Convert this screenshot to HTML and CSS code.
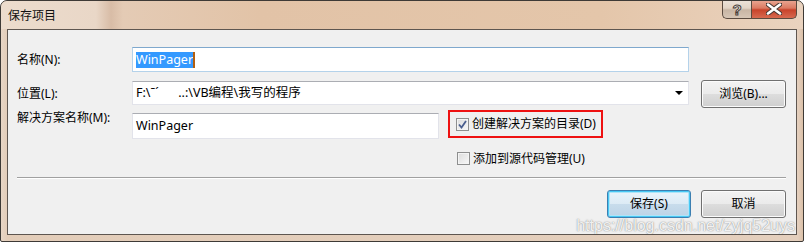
FILE: index.html
```html
<!DOCTYPE html>
<html lang="zh-CN">
<head>
    <meta charset="UTF-8">
    <title>保存项目</title>
    <link rel="stylesheet" href="styles.css">
</head>
<body>
    <div class="window">
        <div class="titlebar">
            <span class="title">保存项目</span>
            <div class="caption-buttons">
                <div class="cap-btn help">?</div>
                <div class="cap-btn close">
                    <svg width="16" height="12" viewBox="0 0 16 12">
                        <path d="M2 1.5 L14 10.5 M14 1.5 L2 10.5" stroke="#4a3a35" stroke-width="4.6" stroke-linecap="round"/>
                        <path d="M2 1.5 L14 10.5 M14 1.5 L2 10.5" stroke="#ffffff" stroke-width="2.6" stroke-linecap="round"/>
                    </svg>
                </div>
            </div>
        </div>

        <div class="client">
            <div class="row row-name">
                <label class="label">名称(N):</label>
                <div class="textbox focused wide"><span class="selected">WinPager</span><span class="caret"></span></div>
            </div>

            <div class="row row-path">
                <label class="label">位置(L):</label>
                <div class="textbox combo wide">
                    <span class="path">F:\ˉˊ      ..:\VB编程\我写的程序</span>
                    <span class="arrow"></span>
                </div>
                <div class="button browse">浏览(B)...</div>
            </div>

            <div class="row row-solution">
                <label class="label">解决方案名称(M):</label>
                <div class="textbox narrow">WinPager</div>
                <div class="highlight">
                    <span class="checkbox checked">
                        <svg width="9" height="9" viewBox="0 0 9 9">
                            <path d="M1 4.5 L3.5 7.5 L8 1" fill="none" stroke="#4a5e8e" stroke-width="1.8"/>
                        </svg>
                    </span>
                    <span class="check-text">创建解决方案的目录(D)</span>
                </div>
            </div>

            <div class="row row-scc">
                <span class="checkbox"></span>
                <span class="check-text">添加到源代码管理(U)</span>
            </div>

            <div class="separator"></div>

            <div class="row row-actions">
                <div class="button default">保存(S)</div>
                <div class="button">取消</div>
            </div>
        </div>

        <div class="watermark">https://blog.csdn.net/zyjq52uys</div>
    </div>
</body>
</html>
```

FILE: styles.css
```css
html, body {
    margin: 0;
    padding: 0;
    background: #ffffff;
}
body {
    font-family: "Noto Sans", "Noto Sans CJK SC", sans-serif;
    font-size: 12px;
    color: #000;
}
.window {
    position: relative;
    box-sizing: border-box;
    width: 804px;
    height: 242px;
    border: 1px solid #3e3a36;
    border-radius: 7px 7px 2px 2px;
    background: linear-gradient(to right, #e8d6c6 0, #e3cdb9 6px, #e4cfbd 797px, #d9bda4 803px);
    display: flex;
    flex-direction: column;
    padding: 0 6px 6px 6px;
    overflow: hidden;
}
.titlebar {
    height: 28px;
    margin: 0 -6px;
    padding: 0 6px 0 7px;
    display: flex;
    align-items: flex-start;
    justify-content: space-between;
    background: linear-gradient(to right, #ecdccd 0, #e9d7c7 95px, #d8bca6 110px, #e4cbb5 122px, #e2c3a7 260px, #e4c6aa 600px, #ead3bf 804px);
    border-radius: 6px 6px 0 0;
}
.title {
    margin-top: 7px;
    line-height: 16px;
    font-size: 12px;
    color: #111;
}
.caption-buttons {
    display: flex;
    margin-top: -1px;
}
.cap-btn {
    box-sizing: border-box;
    height: 19px;
    border: 1px solid #5b4b40;
    border-top: none;
    display: flex;
    align-items: center;
    justify-content: center;
}
.help {
    width: 29px;
    border-right: none;
    border-radius: 0 0 0 5px;
    background: linear-gradient(#ede3da 0, #e2d4c6 45%, #c8b5a4 55%, #d6c5b5 100%);
    font-family: "Liberation Sans", sans-serif;
    font-weight: bold;
    font-size: 15px;
    color: #ffffff;
    -webkit-text-stroke: 1px #4a4038;
    line-height: 17px;
}
.close {
    width: 46px;
    border-radius: 0 0 5px 0;
    background: linear-gradient(#eaa995 0, #db7a62 45%, #c8432b 55%, #d76a50 100%);
}
.client {
    flex: 1;
    border: 1px solid #5e5650;
    background: #f0f0f0;
    padding: 17px 10px 0 9px;
}
.row {
    display: flex;
    align-items: center;
}
.label {
    width: 115px;
    flex-shrink: 0;
    line-height: 16px;
}
.textbox {
    box-sizing: border-box;
    height: 25px;
    background: #ffffff;
    border: 1px solid #e2e3ea;
    border-top-color: #abadb3;
    padding: 0 3px;
    display: flex;
    align-items: center;
    font-size: 12.5px;
    line-height: 16px;
    white-space: pre;
}
.wide {
    width: 557px;
}
.narrow {
    width: 307px;
    height: 26px;
    align-self: flex-end;
}
.focused {
    border-color: #b4d2ea;
    border-top-color: #7fa8cd;
}
.selected {
    background: #3399ff;
    color: #ffffff;
}
.caret {
    width: 2px;
    height: 16px;
    background: #b35f10;
}
.row-name {
    height: 25px;
}
.row-path {
    height: 28px;
    margin-top: 8px;
}
.combo {
    height: 24px;
    align-self: flex-start;
    margin-top: 1px;
    justify-content: space-between;
}
.arrow {
    width: 0;
    height: 0;
    margin-right: 2px;
    border-left: 4px solid transparent;
    border-right: 4px solid transparent;
    border-top: 4px solid #000;
}
.button {
    box-sizing: border-box;
    width: 85px;
    height: 28px;
    border: 1px solid #707070;
    border-radius: 3px;
    background: linear-gradient(#f2f2f2 0, #ebebeb 50%, #dddddd 50%, #cfcfcf 100%);
    box-shadow: inset 0 0 0 1px #fbfbfb;
    display: flex;
    align-items: center;
    justify-content: center;
    line-height: 16px;
}
.browse {
    margin-left: 12px;
}
.row-solution {
    height: 29px;
    margin-top: 2px;
    align-items: stretch;
}
.highlight {
    box-sizing: border-box;
    width: 155px;
    height: 28px;
    margin-left: 9px;
    border: 2px solid #ee1111;
    padding-left: 6px;
    display: flex;
    align-items: center;
}
.checkbox {
    box-sizing: border-box;
    width: 13px;
    height: 13px;
    flex-shrink: 0;
    border: 1px solid #8e8f8f;
    background: linear-gradient(135deg, #dcdcdc, #f8f8f8);
    box-shadow: inset 0 0 0 1px #f4f4f4;
    display: flex;
    align-items: center;
    justify-content: center;
}
.check-text {
    margin-left: 3px;
    line-height: 16px;
}
.row-scc {
    height: 13px;
    margin-top: 13px;
    padding-left: 440px;
}
.separator {
    margin-top: 12px;
    height: 1px;
    background: #a0a0a0;
    border-bottom: 1px solid #ffffff;
}
.row-actions {
    margin-top: 11px;
    justify-content: flex-end;
    gap: 10px;
}
.row-actions .button:first-child {
    width: 84px;
}
.default {
    border-color: #3c7fb1;
    background: linear-gradient(#eaf4fb 0, #dceaf5 50%, #c8dcec 50%, #bcd3e6 100%);
    box-shadow: inset 0 0 0 1px #48c8f4, inset 0 0 0 2px #aee4f8;
}
.watermark {
    position: absolute;
    right: 8px;
    bottom: 6px;
    font-family: "Liberation Sans", sans-serif;
    font-size: 16px;
    line-height: 18px;
    color: rgba(255, 255, 255, 0.9);
    text-shadow: 0 0 1px rgba(90, 90, 90, 0.7), 0 0 2px rgba(120, 120, 120, 0.35);
}
```
